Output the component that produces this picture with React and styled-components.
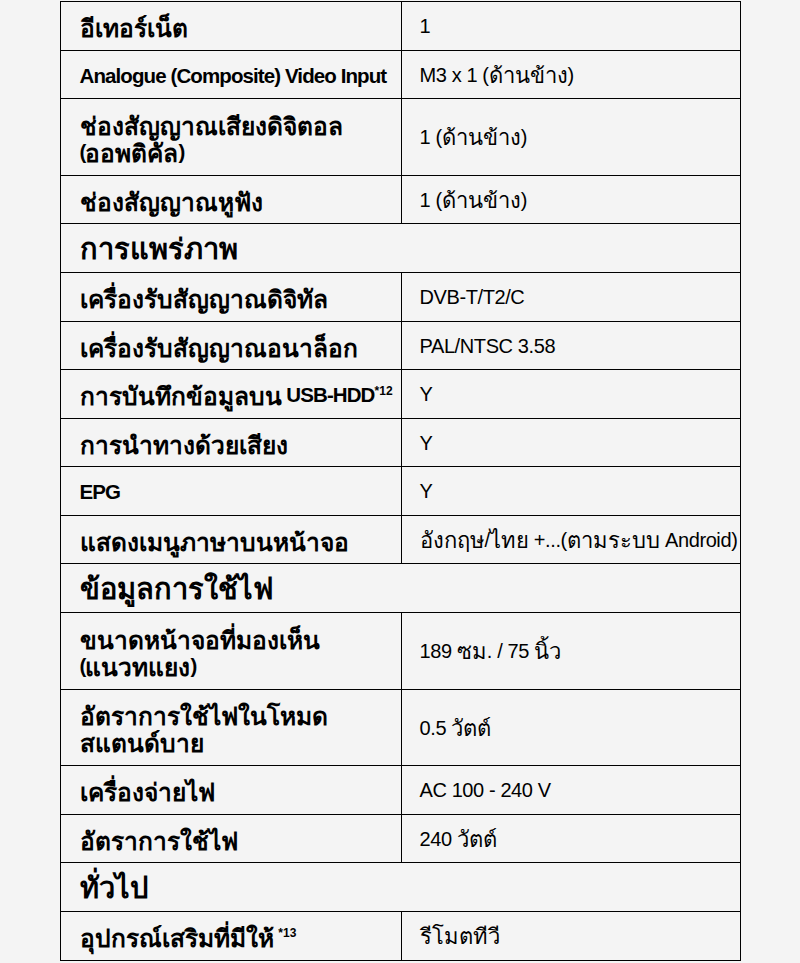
import React from "react";
import styled, { createGlobalStyle } from "styled-components";

const GlobalStyle = createGlobalStyle`
	html, body {
		margin: 0;
		padding: 0;
		background: #f4f4f4;
	}
	body {
		font-family: "Liberation Sans", "Noto Sans", "DejaVu Sans", sans-serif;
		color: #000;
	}
`;

const Page = styled.div`
	padding-top: 1px;
	display: flex;
	justify-content: center;
`;

const SpecTable = styled.table`
	width: 681px;
	border-collapse: collapse;
	table-layout: fixed;
`;

const Row = styled.tr``;

const LabelCell = styled.td`
	width: 341px;
	height: ${(p) => (p.$tall ? "76.5px" : "48.5px")};
	padding: 2px 0 0 19px;
	box-sizing: border-box;
	border: 1px solid #000;
	font-size: 20.5px;
	font-weight: bold;
	letter-spacing: -0.9px;
	line-height: 27px;
	vertical-align: middle;
	white-space: nowrap;
`;

const ValueCell = styled.td`
	height: ${(p) => (p.$tall ? "76.5px" : "48.5px")};
	padding: 2px 0 0 18px;
	box-sizing: border-box;
	border: 1px solid #000;
	font-size: 20px;
	letter-spacing: -0.4px;
	line-height: 27px;
	vertical-align: middle;
	white-space: nowrap;
`;

const SectionCell = styled.td`
	height: 49px;
	padding: 0 19px;
	box-sizing: border-box;
	border: 1px solid #000;
	font-size: 25px;
	font-weight: bold;
	line-height: 30px;
	vertical-align: middle;
`;

// Thai glyphs fall back to a smaller face, so Thai runs get their own size
const Thai = styled.span`
	font-size: ${(p) => p.$size};
	letter-spacing: 0;
	line-height: 0;
	vertical-align: ${(p) => p.$shift};
`;

const Note = styled.sup`
	font-size: 12px;
	font-weight: bold;
	letter-spacing: 0;
	vertical-align: 7px;
	line-height: 0;
`;

const thaiRun = /([\u0E00-\u0E7F]+)/;

function Text({ children, size, shift = "0" }) {
	return children
		.split(thaiRun)
		.map((part, i) =>
			thaiRun.test(part) ? (
				<Thai key={i} $size={size} $shift={shift}>
					{part}
				</Thai>
			) : (
				part
			)
		);
}

const rows = [
	{ label: "อีเทอร์เน็ต", value: "1" },
	{ label: "Analogue (Composite) Video Input", value: "M3 x 1 (ด้านข้าง)" },
	{
		label: ["ช่องสัญญาณเสียงดิจิตอล", "(ออพติคัล)"],
		value: "1 (ด้านข้าง)",
	},
	{ label: "ช่องสัญญาณหูฟัง", value: "1 (ด้านข้าง)" },
	{ section: "การแพร่ภาพ" },
	{ label: "เครื่องรับสัญญาณดิจิทัล", value: "DVB-T/T2/C" },
	{ label: "เครื่องรับสัญญาณอนาล็อก", value: "PAL/NTSC 3.58" },
	{ label: "การบันทึกข้อมูลบน USB-HDD", note: "*12", value: "Y" },
	{ label: "การนำทางด้วยเสียง", value: "Y" },
	{ label: "EPG", value: "Y" },
	{
		label: "แสดงเมนูภาษาบนหน้าจอ",
		value: "อังกฤษ/ไทย +...(ตามระบบ Android)",
	},
	{ section: "ข้อมูลการใช้ไฟ" },
	{
		label: ["ขนาดหน้าจอที่มองเห็น", "(แนวทแยง)"],
		value: "189 ซม. / 75 นิ้ว",
	},
	{
		label: ["อัตราการใช้ไฟในโหมด", "สแตนด์บาย"],
		value: "0.5 วัตต์",
	},
	{ label: "เครื่องจ่ายไฟ", value: "AC 100 - 240 V" },
	{ label: "อัตราการใช้ไฟ", value: "240 วัตต์" },
	{ section: "ทั่วไป" },
	{ label: "อุปกรณ์เสริมที่มีให้ ", note: "*13", value: "รีโมตทีวี" },
];

function App() {
	return (
		<>
			<GlobalStyle />
			<Page>
				<SpecTable>
					<tbody>
						{rows.map((row, index) => {
							if (row.section) {
								return (
									<Row key={index}>
										<SectionCell colSpan={2}>
											<Text size="29px" shift="-2px">
												{row.section}
											</Text>
										</SectionCell>
									</Row>
								);
							}
							const tall = Array.isArray(row.label);
							const lines = tall ? row.label : [row.label];
							return (
								<Row key={index}>
									<LabelCell $tall={tall}>
										{lines.map((line, i) => (
											<div key={i}>
												<Text size="24.5px" shift="-3px">
													{line}
												</Text>
												{row.note && <Note>{row.note}</Note>}
											</div>
										))}
									</LabelCell>
									<ValueCell $tall={tall}>
										<Text size="22px" shift="-1px">
											{row.value}
										</Text>
									</ValueCell>
								</Row>
							);
						})}
					</tbody>
				</SpecTable>
			</Page>
		</>
	);
}

export default App;
